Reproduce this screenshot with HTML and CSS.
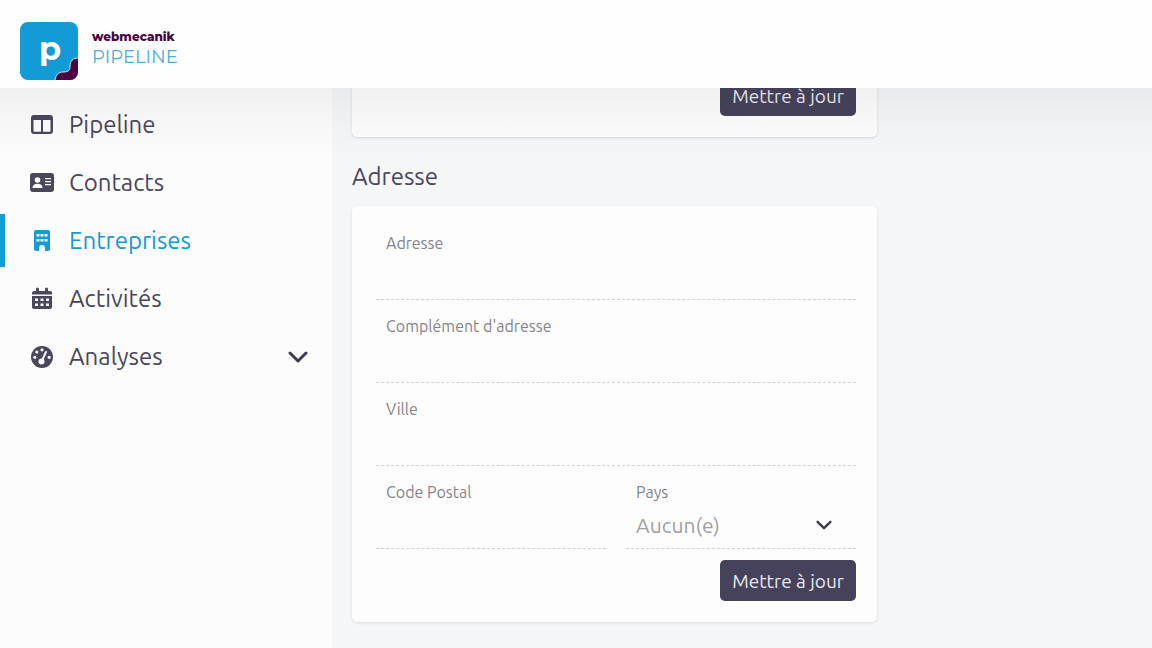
FILE: index.html
```html
<!DOCTYPE html>
<html lang="fr">
<head>
    <meta charset="UTF-8">
    <meta name="viewport" content="width=device-width, initial-scale=1.0">
    <title>Webmecanik Pipeline - Entreprises</title>
    <link rel="stylesheet" href="styles.css">
</head>
<body>
    <header class="topbar">
        <a class="brand" href="#">
            <svg class="brand-logo" viewBox="0 0 58 58" aria-hidden="true">
                <rect width="58" height="58" rx="8" fill="#139bd5"/>
                <path d="M35 58c1-5 3-8 8-8 6 0 7-2 7-6 0-5 3-8 8-8v14a8 8 0 0 1-8 8z" fill="#4b0741"/>
                <path d="M35 58c1-5 3-8 8-8 6 0 7-2 7-6 0-5 3-8 8-8" fill="none" stroke="#d9e6f0" stroke-width="1"/>
                <text class="brand-letter" x="30" y="38" text-anchor="middle">p</text>
            </svg>
            <span class="brand-text">
                <span class="brand-company">webmecanik</span>
                <span class="brand-product">PIPELINE</span>
            </span>
        </a>
    </header>

    <div class="layout">
        <!-- Menu -->
        <nav class="sidebar">
            <a class="nav-item" href="#">
                <svg class="nav-icon" viewBox="0 0 24 24"><path fill-rule="evenodd" d="M4 2h16a3 3 0 0 1 3 3v13a3 3 0 0 1-3 3H4a3 3 0 0 1-3-3V5a3 3 0 0 1 3-3zM3.500 7v11a.7.700 0 0 0 .7.700H11V7zM13 7v11.700h6.800a.7.700 0 0 0 .7-.7V7z"/></svg>
                <span>Pipeline</span>
            </a>
            <a class="nav-item" href="#">
                <svg class="nav-icon" viewBox="0 0 24 24">
                    <rect x="0" y="2" width="24" height="19" rx="3"/>
                    <g fill="#fcfcfd"><circle cx="7.500" cy="9" r="2.800"/><path d="M2.500 17c0-3 2-4.200 5-4.200s5 1.200 5 4.200z"/><path d="M15 7h6v1.300h-6zM15 10h6v1.300h-6zM15 13h6v1.300h-6z"/></g>
                </svg>
                <span>Contacts</span>
            </a>
            <a class="nav-item active" href="#">
                <svg class="nav-icon" viewBox="0 0 24 24"><path fill-rule="evenodd" d="M6 1h12a2 2 0 0 1 2 2v17a2 2 0 0 1-2 2h-3v-3a3 3 0 0 0-6 0v3H6a2 2 0 0 1-2-2V3a2 2 0 0 1 2-2zM6.500 5v2.500h3V5zM10.500 5v2.500h3V5zM14.500 5v2.500h3V5zM6.500 10v2.500h3V10zM10.500 10v2.500h3V10zM14.500 10v2.500h3V10z"/></svg>
                <span>Entreprises</span>
            </a>
            <a class="nav-item" href="#">
                <svg class="nav-icon" viewBox="0 0 24 24"><path fill-rule="evenodd" d="M6 2a1.500 1.500 0 0 1 3 0v2h6V2a1.500 1.500 0 0 1 3 0v2h2a2 2 0 0 1 2 2v1.500H2V6a2 2 0 0 1 2-2h2zM2 9h20v11a2 2 0 0 1-2 2H4a2 2 0 0 1-2-2zM5 11.500V14h3v-2.500zM10.500 11.500V14h3v-2.500zM16 11.500V14h3v-2.500zM5 16.500V19h3v-2.500zM10.500 16.500V19h3v-2.500zM16 16.500V19h3v-2.500z"/></svg>
                <span>Activités</span>
            </a>
            <a class="nav-item" href="#">
                <svg class="nav-icon" viewBox="0 0 24 24">
                    <circle cx="12" cy="12" r="11"/>
                    <g fill="#fcfcfd"><circle cx="12" cy="4.800" r="1.600"/><circle cx="6.800" cy="7" r="1.600"/><circle cx="4.800" cy="12.300" r="1.600"/><circle cx="19.200" cy="12.300" r="1.600"/><circle cx="11.500" cy="16.500" r="3"/></g>
                    <path d="M11.500 16.500 16 7" fill="none" stroke="#fcfcfd" stroke-width="2" stroke-linecap="round"/>
                </svg>
                <span>Analyses</span>
                <svg class="nav-chevron" viewBox="0 0 20 12"><path d="m2 2 8 8 8-8"/></svg>
            </a>
        </nav>

        <main class="content">
            <div class="column">
                <section class="card card-previous">
                    <div class="actions">
                        <button class="btn" type="button">Mettre à jour</button>
                    </div>
                </section>

                <!-- Adresse -->
                <h2 class="section-title">Adresse</h2>
                <form class="card">
                    <div class="field">
                        <label for="adresse">Adresse</label>
                        <input type="text" id="adresse">
                    </div>
                    <div class="field">
                        <label for="complement">Complément d'adresse</label>
                        <input type="text" id="complement">
                    </div>
                    <div class="field">
                        <label for="ville">Ville</label>
                        <input type="text" id="ville">
                    </div>
                    <div class="field-row">
                        <div class="field">
                            <label for="code-postal">Code Postal</label>
                            <input type="text" id="code-postal">
                        </div>
                        <div class="field">
                            <label for="pays">Pays</label>
                            <div class="select-line">
                                <select id="pays">
                                    <option>Aucun(e)</option>
                                </select>
                                <svg class="select-chevron" viewBox="0 0 20 12"><path d="m2 2 8 8 8-8"/></svg>
                            </div>
                        </div>
                    </div>
                    <div class="actions">
                        <button class="btn" type="button">Mettre à jour</button>
                    </div>
                </form>
            </div>
        </main>
    </div>
</body>
</html>
```
FILE: styles.css
```css
* {
    box-sizing: border-box;
}
body {
    margin: 0;
    min-height: 100vh;
    display: flex;
    flex-direction: column;
    font-family: Ubuntu, "Noto Sans", sans-serif;
    color: #4a475a;
    background-color: #f5f6f8;
}
.topbar {
    position: sticky;
    top: 0;
    z-index: 2;
    height: 88px;
    padding: 13px 20px 0;
    display: flex;
    align-items: center;
    background-color: #fefefe;
}
/* soft shade under the bar */
.topbar::after {
    content: "";
    position: absolute;
    top: 100%;
    left: 0;
    right: 0;
    height: 72px;
    background: linear-gradient(rgba(0, 0, 0, 0.05), rgba(0, 0, 0, 0.02) 50%, transparent);
    pointer-events: none;
}
.brand {
    display: flex;
    align-items: center;
    gap: 14px;
    text-decoration: none;
}
.brand-logo {
    width: 58px;
    height: 58px;
}
.brand-letter {
    font-family: Montserrat, Lato, sans-serif;
    font-size: 32px;
    font-weight: 700;
    fill: #fff;
}
.brand-text {
    display: flex;
    flex-direction: column;
    padding-bottom: 7px;
    font-family: Montserrat, Lato, sans-serif;
}
.brand-company {
    font-size: 12px;
    font-weight: 800;
    line-height: 20px;
    color: #4b0741;
}
.brand-product {
    font-size: 18px;
    line-height: 20px;
    color: #4badd8;
}
.layout {
    flex: 1;
    display: flex;
}

/* Menu */
.sidebar {
    width: 332px;
    padding-top: 10px;
    display: flex;
    flex-direction: column;
    gap: 5px;
    background-color: #fcfcfd;
}
.nav-item {
    height: 53px;
    padding: 0 24px 0 25px;
    display: flex;
    align-items: center;
    gap: 15px;
    border-left: 5px solid transparent;
    color: #4a475a;
    font-size: 24px;
    text-decoration: none;
}
.nav-item.active {
    border-left-color: #139bd5;
    color: #139bd5;
}
.nav-icon {
    width: 24px;
    height: 24px;
    fill: currentColor;
}
.nav-chevron,
.select-chevron {
    fill: none;
    stroke: #3f3c50;
    stroke-width: 3;
    stroke-linecap: round;
    stroke-linejoin: round;
}
.nav-chevron {
    width: 20px;
    height: 12px;
    margin-left: auto;
}

/* Contenu */
.content {
    flex: 1;
    padding: 0 0 25px 20px;
    display: grid;
    grid-template-columns: 21fr 11fr;
}
.card {
    padding: 11px 21px 21px 24px;
    background-color: #fdfdfd;
    border-radius: 5px;
    box-shadow: 0 1px 3px rgba(0, 0, 0, 0.12);
}
.card-previous {
    margin-top: -35px;
}
.section-title {
    margin: 24px 0 13px;
    font-size: 24px;
    font-weight: 400;
    line-height: 32px;
}
.field {
    height: 83px;
    padding: 15px 10px 0;
    display: flex;
    flex-direction: column;
    border-bottom: 1px dashed #d2d2d4;
}
.field label {
    font-size: 16px;
    line-height: 22px;
    color: #858388;
}
.field input,
.field select {
    width: 100%;
    height: 44px;
    padding: 0;
    border: none;
    outline: none;
    background: transparent;
    font-family: inherit;
    font-size: 21px;
    color: #a09fa3;
}
.field select {
    appearance: none;
}
.field-row {
    display: grid;
    grid-template-columns: 1fr 1fr;
    gap: 20px;
}
.select-line {
    position: relative;
}
.select-chevron {
    position: absolute;
    top: 17px;
    right: 14px;
    width: 16px;
    height: 10px;
    pointer-events: none;
}
.actions {
    margin-top: 11px;
    display: flex;
    justify-content: flex-end;
}
.btn {
    height: 41px;
    padding: 0 12px;
    border: none;
    border-radius: 5px;
    background-color: #46425b;
    color: #e8e8ec;
    font-family: inherit;
    font-size: 19px;
    cursor: pointer;
}
.btn:hover {
    background-color: #383449;
}
```
